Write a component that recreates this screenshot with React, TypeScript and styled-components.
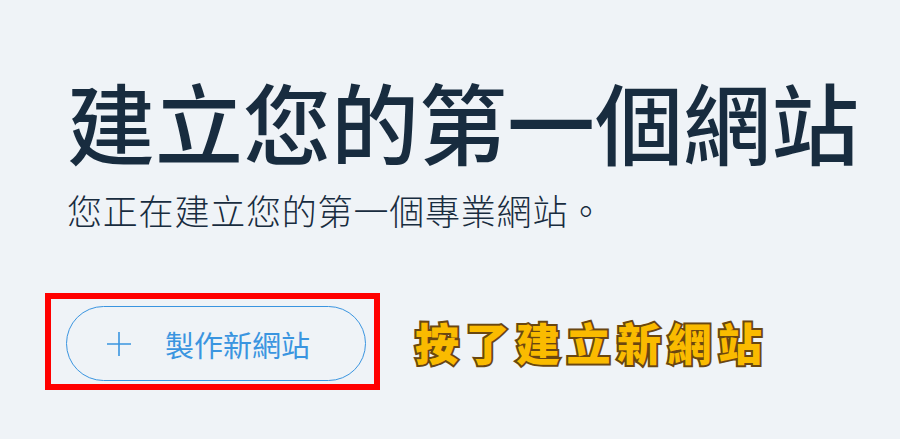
import React from 'react';
import styled, { createGlobalStyle } from 'styled-components';

const GlobalStyle = createGlobalStyle`
  html, body {
    margin: 0;
    padding: 0;
    background: #eff3f7;
  }
  body {
    font-family: "Noto Sans CJK TC", "Noto Sans", sans-serif;
  }
`;

const Page = styled.div`
  width: 900px;
  height: 439px;
  box-sizing: border-box;
  padding: 68px 0 0 45px;
  overflow: hidden;
`;

const Title = styled.h1`
  margin: 0 0 0 22px;
  font-size: 88px;
  line-height: 104px;
  font-weight: 500;
  color: #182c3f;
  white-space: nowrap;
`;

const Subtitle = styled.p`
  margin: 13px 0 0 22px;
  font-size: 35px;
  line-height: 50px;
  letter-spacing: 0.8px;
  font-weight: 300;
  color: #182c3f;
  white-space: nowrap;
`;

const ActionRow = styled.div`
  display: flex;
  align-items: center;
  gap: 35px;
  margin-top: 58px;
`;

const Highlight = styled.div`
  box-sizing: border-box;
  width: 335px;
  height: 97px;
  border: 6px solid #ff0000;
  padding: 7px 0 0 15px;
`;

const CreateButton = styled.button`
  box-sizing: border-box;
  width: 300px;
  height: 75px;
  border: 1.5px solid #3a95e0;
  border-radius: 38px;
  background: transparent;
  color: #3a95e0;
  display: flex;
  align-items: center;
  padding: 0 0 0 39px;
  gap: 33px;
  font-family: "Noto Sans CJK TC", sans-serif;
  font-size: 29px;
  font-weight: 400;
  cursor: pointer;
`;

const Plus = styled.span`
  display: flex;
  width: 26px;
  height: 26px;
`;

const Note = styled.span`
  font-family: "Noto Sans CJK TC", sans-serif;
  font-size: 44px;
  font-weight: 900;
  letter-spacing: 6.5px;
  color: #fabb00;
  -webkit-text-stroke: 4px #6a4710;
  paint-order: stroke fill;
  white-space: nowrap;
  line-height: 1;
`;

export default function App() {
  return (
    <>
      <GlobalStyle />
      <Page>
        <Title>建立您的第一個網站</Title>
        <Subtitle>您正在建立您的第一個專業網站。</Subtitle>
        <ActionRow>
          <Highlight>
            <CreateButton>
              <Plus>
                <svg width="26" height="26" viewBox="0 0 26 26">
                  <path d="M13 1v24M1 13h24" stroke="#3a95e0" strokeWidth="1.6" fill="none" />
                </svg>
              </Plus>
              製作新網站
            </CreateButton>
          </Highlight>
          <Note>按了建立新網站</Note>
        </ActionRow>
      </Page>
    </>
  );
}
